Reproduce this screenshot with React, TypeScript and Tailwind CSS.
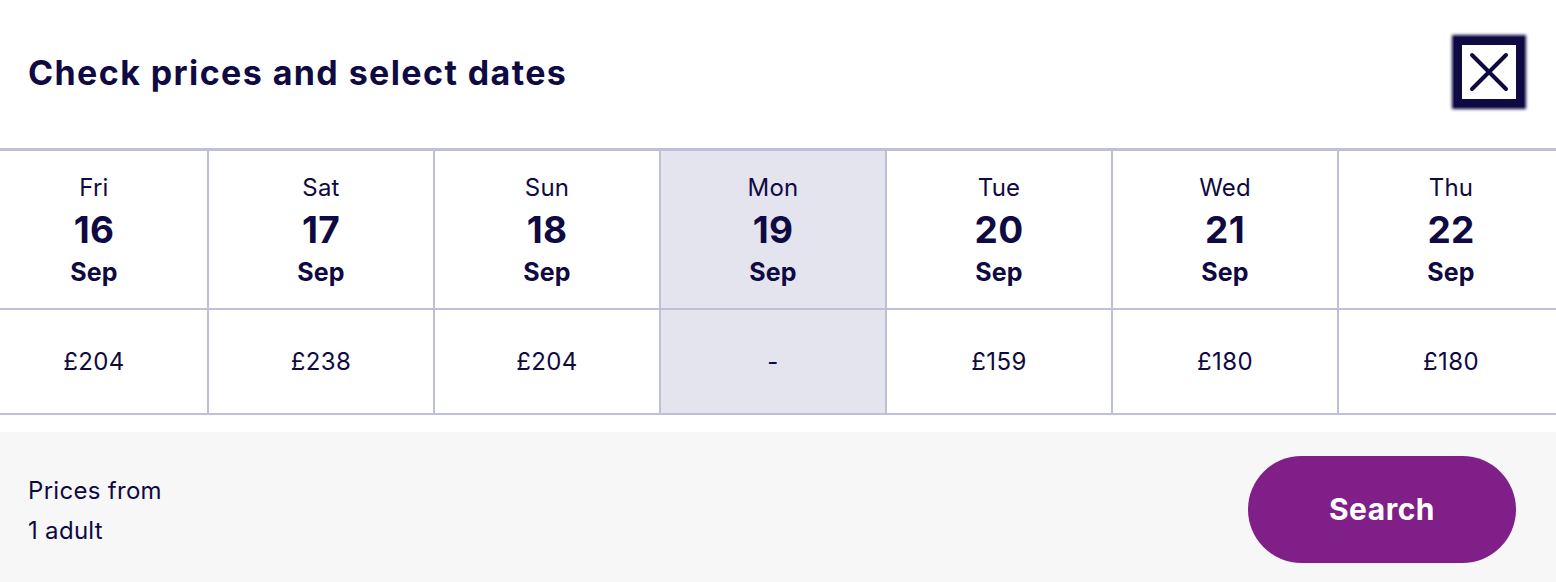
import React from "react";

const days = [
  { d: "Fri", n: "16", p: "£204" },
  { d: "Sat", n: "17", p: "£238" },
  { d: "Sun", n: "18", p: "£204" },
  { d: "Mon", n: "19", p: "-", sel: true },
  { d: "Tue", n: "20", p: "£159" },
  { d: "Wed", n: "21", p: "£180" },
  { d: "Thu", n: "22", p: "£180" },
];

export default function App() {
  return (
    <div className="w-[1556px] h-[582px] bg-white text-[#0f0a42] overflow-hidden flex flex-col" style={{ fontFamily: "Inter, 'Noto Sans', sans-serif" }}>
      <div className="h-[148px] flex items-center justify-between pl-[28px] pr-[32px]">
        <h1 className="text-[34px] font-bold tracking-[1.4px] mt-[-4px]">Check prices and select dates</h1>
        <button className="w-[70px] h-[70px] border-[8px] border-[#0f0a42] bg-white flex items-center justify-center shadow-[0_0_3px_2px_#0f0a42] mt-[-4px]">
          <svg width="40" height="40" viewBox="0 0 40 40" fill="none" stroke="#0f0a42" strokeWidth="4" strokeLinecap="round">
            <path d="M3 3 L37 37 M37 3 L3 37" />
          </svg>
        </button>
      </div>
      <div className="border-t-[3px] border-[#bfc0d8] overflow-hidden">
        <div className="w-[1582px] ml-[-19px] grid grid-cols-7 border-b-2 border-[#bfc0d8]">
          {days.map((x, i) => (
            <div key={i} className={`flex flex-col ${i > 0 ? "border-l-2 border-[#bfc0d8]" : ""} ${x.sel ? "bg-[#e4e4ef]" : ""}`}>
              <div className="h-[159px] flex flex-col items-center pt-[16px] border-b-2 border-[#bfc0d8]">
                <div className="text-[24px] leading-[42px] tracking-[0.2px]">{x.d}</div>
                <div className="text-[37px] font-bold leading-[42px] tracking-[0.3px]">{x.n}</div>
                <div className="text-[25px] font-bold leading-[42px] tracking-[0.2px]">Sep</div>
              </div>
              <div className="h-[103px] flex items-center justify-center text-[24px] tracking-[0.4px]">{x.p}</div>
            </div>
          ))}
        </div>
      </div>
      <div className="h-[17px]" />
      <div className="flex-1 bg-[#f7f7f7] flex items-center justify-between pl-[28px] pr-[40px]">
        <div className="text-[24px] leading-[40px] tracking-[0.3px] mt-[8px]">
          <div>Prices from</div>
          <div>1 adult</div>
        </div>
        <button className="w-[268px] h-[107px] rounded-full bg-[#7f1f87] text-white text-[30px] font-bold tracking-[0.5px] mt-[4px]">Search</button>
      </div>
    </div>
  );
}
